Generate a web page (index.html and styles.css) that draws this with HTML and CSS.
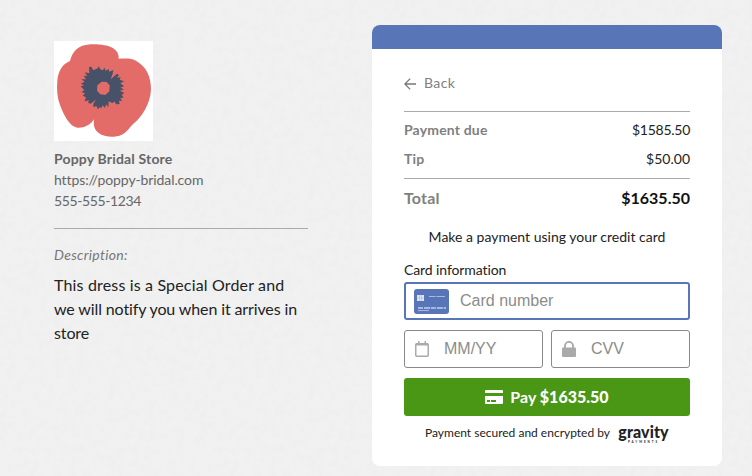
FILE: index.html
```html
<!DOCTYPE html>
<html lang="en">
<head>
    <meta charset="UTF-8">
    <meta name="viewport" content="width=device-width, initial-scale=1.0">
    <title>Poppy Bridal Store - Payment</title>
    <link rel="stylesheet" href="styles.css">
</head>
<body>
    <div class="page">
        <div class="store">
            <svg class="store-logo" viewBox="0 0 297 300" preserveAspectRatio="none">
                <rect width="297" height="300" fill="#fff"/>
                <path fill="#e36c68" d="M48 60C55 30 76 12 100 11C130 8 160 13 172 19C188 27 195 38 194 53C215 53 235 51 247 60C278 78 291 108 291 145C290 188 262 230 240 247C226 259 218 276 200 283C179 291 150 288 134 276C120 266 118 252 120 235C107 254 88 262 70 260C47 257 30 224 18 192C9 167 8 143 10 119C13 91 23 71 48 60Z"/>
                <path fill="#475269" d="M105 78L112 77L118 88L131 82L134 76L139 85L146 88L152 80L155 89L164 84L166 92L178 87L176 98L170 115L189 98L195 102L189 111L200 108L197 116L210 121L199 127L210 136L199 140L210 145L198 149L211 156L203 161L209 170L199 171L204 180L195 179L197 189L187 190L180 181L176 187L164 181L163 199L156 190L153 201L146 193L142 202L138 198L132 205L127 195L118 199L118 188L126 176L110 188L102 185L105 178L92 181L96 169L86 164L93 157L82 153L91 148L80 136L91 133L80 128L92 122L82 115L96 115L89 104L100 105L92 94L106 97Z"/>
                <path fill="#e36c68" d="M143 122L158 123L167 133L166 151L154 162L139 160L129 149L130 133Z"/>
            </svg>
            <div class="store-info">
                <div class="store-name">Poppy Bridal Store</div>
                <div class="store-url">https://poppy-bridal.com</div>
                <div class="store-phone">555-555-1234</div>
            </div>
            <p class="label">Description:</p>
            <p class="description"><span class="first-line">This dress is a Special Order and</span><br>we will notify you when it arrives in<br>store</p>
        </div>

        <div class="card">
            <div class="card-header"></div>
            <div class="card-body">
                <div class="back">
                    <svg class="back-icon" viewBox="0 0 12 12">
                        <path d="M6.2 0.6L0.8 6L6.2 11.4M0.8 6H12" fill="none" stroke="#777" stroke-width="1.3"/>
                    </svg>
                    <span>Back</span>
                </div>
                <div class="amounts">
                    <div class="row"><b>Payment due</b><span class="due-amount">$1585.50</span></div>
                    <div class="row"><b>Tip</b><span>$50.00</span></div>
                </div>
                <div class="row total"><b>Total</b><strong>$1635.50</strong></div>
                <p class="prompt">Make a payment using your credit card</p>
                <p class="field-title">Card information</p>
                <div class="field active">
                    <svg class="card-icon" viewBox="0 0 35 25">
                        <rect width="35" height="25" rx="3" fill="#5876b7"/>
                        <path fill="#dfe6f3" d="M3 6h7v6H3z"/>
                        <path stroke="#9fb1d8" d="M5.500 6v6M7.500 6v6M3 9h7" stroke-width=".5"/>
                        <path stroke="#a9badc" d="M15 7.500h16" stroke-width="1.2" stroke-dasharray="6.5 .8 9"/>
                        <path stroke="#c3cfe7" d="M4 19h28" stroke-width="1.5" stroke-dasharray="5 1 6 .8"/>
                        <path stroke="#b4c3e1" d="M4 21.600h11" stroke-width=".9"/>
                    </svg>
                    <input type="text" placeholder="Card number">
                </div>
                <div class="field-row">
                    <div class="field">
                        <svg class="calendar-icon" viewBox="0 0 14 16">
                            <rect x=".75" y="2.75" width="12.5" height="12.5" rx="1" fill="none" stroke="#aaa" stroke-width="1.5"/>
                            <path d="M1 2h12v2.500H1zM3 0h1.500v3H3zM9.500 0H11v3H9.500z" fill="#aaa"/>
                        </svg>
                        <input type="text" placeholder="MM/YY">
                    </div>
                    <div class="field">
                        <svg class="lock-icon" viewBox="0 0 14 16">
                            <rect y="6.500" width="14" height="9.500" rx="1" fill="#aaa"/>
                            <path d="M3 7V4.900a4 4 0 0 1 8 0V7" fill="none" stroke="#aaa" stroke-width="1.900"/>
                        </svg>
                        <input type="text" placeholder="CVV">
                    </div>
                </div>
                <button class="pay">
                    <svg class="pay-icon" viewBox="0 0 18 14">
                        <path fill="#fff" d="M1 0h16a1 1 0 0 1 1 1v2H0V1a1 1 0 0 1 1-1zM0 6h18v7a1 1 0 0 1-1 1H1a1 1 0 0 1-1-1z"/>
                        <path fill="#4a9716" d="M2 10h3v2H2zM6 10h5v2H6z"/>
                    </svg>
                    <span>Pay <b>$1635.50</b></span>
                </button>
                <div class="secured">
                    <span>Payment secured and encrypted by</span>
                    <div class="gravity">
                        <span class="gravity-name">gravity</span>
                        <span class="gravity-sub">PAYMENTS</span>
                    </div>
                </div>
            </div>
        </div>
    </div>
</body>
</html>
```
FILE: styles.css
```css
* {
    box-sizing: border-box;
}
body {
    margin: 0;
    font-family: Lato, "Liberation Sans", sans-serif;
    font-size: 14px;
    font-variant-ligatures: none;
    color: #222;
    background-color: #f1f1f1;
    /* faint paper texture */
    background-image: url("data:image/svg+xml,%3Csvg xmlns='http://www.w3.org/2000/svg' width='200' height='200'%3E%3Cfilter id='n'%3E%3CfeTurbulence type='fractalNoise' baseFrequency='.13' numOctaves='3' stitchTiles='stitch'/%3E%3CfeColorMatrix values='0 0 0 0 .78 0 0 0 0 .78 0 0 0 0 .78 .45 0 0 0 -.16'/%3E%3C/filter%3E%3Crect width='200' height='200' filter='url(%23n)'/%3E%3C/svg%3E");
}
p {
    margin: 0;
}
svg {
    display: block;
    flex: none;
}
.page {
    display: flex;
    justify-content: space-between;
    align-items: flex-start;
    height: 476px;
    padding: 25px 30px 0 54px;
}
.store {
    width: 254px;
    padding-top: 16px;
}
.store-logo {
    width: 99px;
    height: 100px;
}
.store-info {
    padding: 7px 0 17px;
    border-bottom: 1px solid #aaa;
    line-height: 21px;
    color: #666;
}
.store-name {
    font-weight: bold;
    letter-spacing: 0.17px;
}
.store-url {
    letter-spacing: -0.1px;
}
.store-phone {
    letter-spacing: -0.38px;
}
.label {
    margin-top: 16px;
    line-height: 20px;
    font-style: italic;
    letter-spacing: 0.3px;
    color: #777;
}
.description {
    margin-top: 8px;
    font-size: 16px;
    line-height: 24px;
    letter-spacing: -0.12px;
    white-space: nowrap;
}
.first-line {
    letter-spacing: 0.16px;
}
.card {
    width: 350px;
    height: 441px;
    background: #fff;
    border-radius: 8px;
    overflow: hidden;
}
.card-header {
    height: 24px;
    background: #5876b7;
}
.card-body {
    padding: 23px 32px 0;
}
.back {
    display: flex;
    align-items: center;
    gap: 8px;
    height: 39px;
    padding-bottom: 17px;
    line-height: 22px;
    letter-spacing: 0.4px;
    color: #808080;
}
.back-icon {
    width: 12px;
    height: 12px;
    margin-top: 2px;
}
.amounts {
    padding: 3px 0 5px;
    border-top: 1px solid #aaa;
    border-bottom: 1px solid #aaa;
}
.row {
    display: flex;
    justify-content: space-between;
    line-height: 29px;
}
.row b {
    letter-spacing: 0.17px;
    color: #808080;
}
.due-amount {
    letter-spacing: -0.27px;
}
.total {
    font-size: 16px;
    line-height: 38px;
}
.total strong {
    color: #111;
}
.prompt {
    margin-top: 9px;
    text-align: center;
    line-height: 22px;
}
.field-title {
    margin-top: 12px;
    line-height: 20px;
    letter-spacing: -0.1px;
}
.field {
    display: flex;
    align-items: center;
    height: 38px;
    margin-top: 2px;
    border: 1px solid #888;
    border-radius: 3px;
}
.field input {
    width: 100%;
    min-width: 0;
    padding: 0;
    border: none;
    outline: none;
    background: none;
    font: 16px "Liberation Sans", Arial, sans-serif;
}
.field input::placeholder {
    color: #8c8c8c;
}
.active {
    gap: 11px;
    padding-left: 8px;
    border: 2px solid #5876b7;
}
.card-icon {
    width: 35px;
    height: 25px;
}
.field-row {
    display: flex;
    gap: 8px;
    margin-top: 8px;
}
.field-row .field {
    width: 139px;
    gap: 15px;
    padding-left: 10px;
}
.calendar-icon,
.lock-icon {
    width: 14px;
    height: 16px;
}
.pay {
    display: flex;
    align-items: center;
    justify-content: center;
    gap: 7px;
    width: 100%;
    height: 38px;
    margin-top: 10px;
    padding: 0 0 1px;
    border: none;
    border-radius: 3px;
    background: #4a9716;
    color: #fff;
    font: bold 16px Lato, sans-serif;
}
.pay b {
    font-weight: 900;
}
.pay-icon {
    width: 18px;
    height: 14px;
}
.secured {
    display: flex;
    justify-content: center;
    gap: 8px;
    margin-top: 7px;
    font-size: 12px;
    line-height: 20px;
    white-space: nowrap;
}
.gravity {
    display: flex;
    flex-direction: column;
    align-items: center;
    width: 51px;
}
.gravity-name {
    font-size: 16px;
    font-weight: 900;
    letter-spacing: 0.1px;
    line-height: 18px;
}
.gravity-sub {
    font-size: 3px;
    font-weight: bold;
    letter-spacing: 1.9px;
    line-height: 3px;
}
```
